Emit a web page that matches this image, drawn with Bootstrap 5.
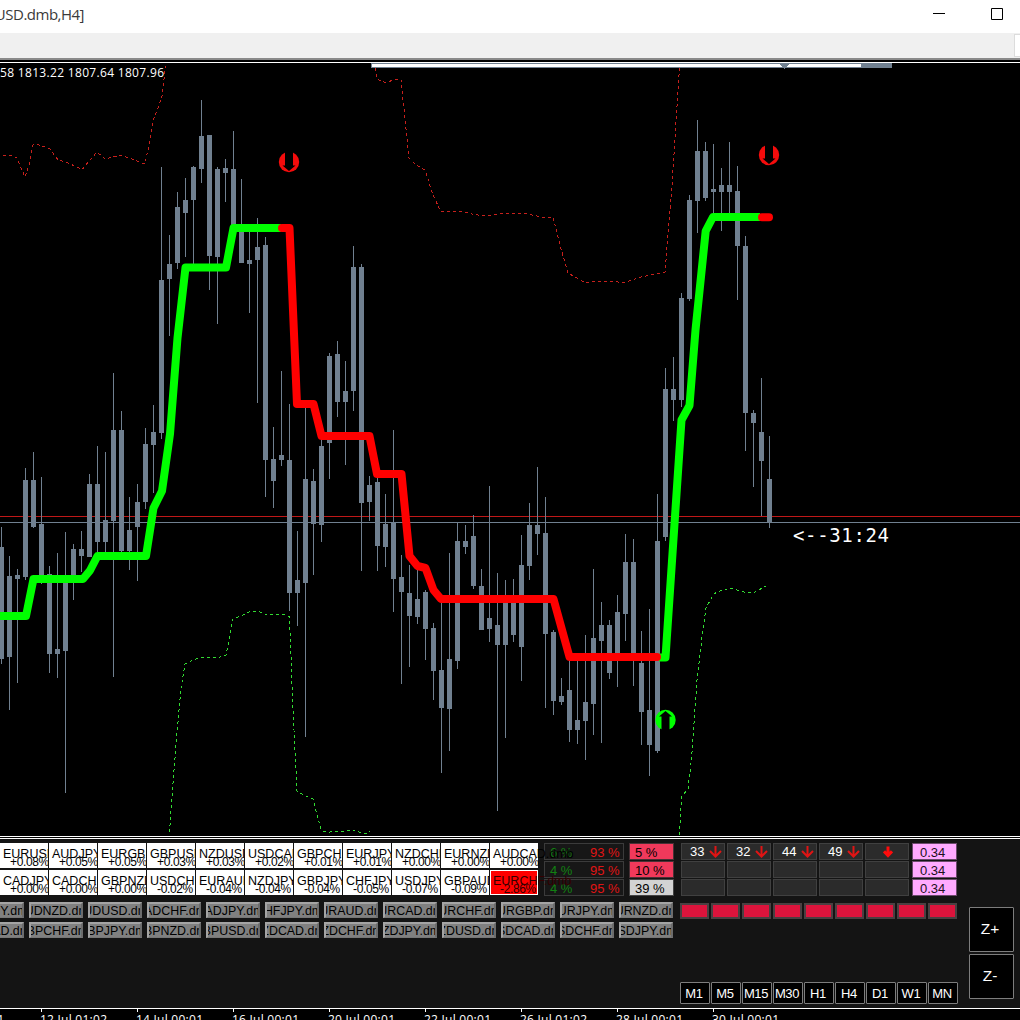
<!DOCTYPE html>
<html lang="en">
<head>
<meta charset="utf-8">
<meta name="viewport" content="width=device-width, initial-scale=1">
<title>USD.dmb,H4</title>
<link href="https://cdn.jsdelivr.net/npm/bootstrap@5.3.0/dist/css/bootstrap.min.css" rel="stylesheet">
<style>
body{width:1020px;height:1020px;background:#000;font-family:"Liberation Sans",Arial,sans-serif;font-size:13px;line-height:1;overflow:hidden}
.titlebar{height:33px;background:#fff;color:#3a3a3a;padding-right:17px}
.title-clip{width:84px;height:33px;overflow:hidden;font:15px/29px "Open Sans","Noto Sans",sans-serif;white-space:nowrap;letter-spacing:-.5px}
.toolstrip{height:25px;background:#f0f0f0}
.toolstrip-end{width:6px;height:23px;margin-top:1px;background:#fff;border:1px solid #dcdcdc;border-right:0}
.frame-top{height:5px;background:#000;border-top:2px solid #8a8a8a;border-bottom:1px solid #fff}
.plot{height:773px}
.plot svg{display:block}
.frame-mid{height:3px;border-top:1px solid #fff;border-bottom:1px solid #fff}
.panel{height:169px;background:#141414;padding-top:4px}
.left-side{width:680px;flex:none}
.quotes{width:539px;display:grid;grid-template-columns:repeat(11,48px);gap:2px 1px;grid-auto-rows:25px;flex:none}
.quote{background:#fff;color:#000;overflow:hidden;white-space:nowrap;padding:5px 0 0 3px;font-size:12.5px}
.quote b{display:block;font-weight:400;height:8px;line-height:13px}
.quote i{display:block;font-style:normal;font-size:12px;line-height:13px;padding-left:7px;letter-spacing:-.35px}
.quote.spill{overflow:visible;position:relative;z-index:2}
.quote.alert-q{background:#f00;border:1px solid #fff;padding:4px 0 0 2px;color:#300}
.stack{display:flex;flex-direction:column;gap:1px}
.box{height:17px;border:1px solid #3b3b3b;background:#171717;line-height:18px;white-space:nowrap}
.pct{width:80px;padding-left:5px}
.pct span{display:inline-block;width:40px;color:#128012}
.pct em{font-style:normal;color:#e01414}
.rate{width:45px;background:#f0395b;border-color:#4a3035;color:#000;padding-left:5px}
.rate.neutral{background:#d3d3d3;border-color:#444}
.pairs{display:flex;gap:5px;margin-left:-30px}
.pair{flex:none;width:54px;height:16px;background:#808080;border:2px solid;border-width:2px 2px 1px 2px;border-color:#a4a4a4 #6c6c6c #777 #a4a4a4;color:#000;font-size:12.4px;line-height:15px;display:flex;justify-content:center;overflow:hidden;white-space:nowrap}
.mid-side{width:278px;flex:none}
.cells{display:grid;grid-template-columns:repeat(5,44px);gap:1px 2px;padding-left:1px;width:229px}
.cells .box{background:#2b2b2b;border-color:#404040;color:#fff;position:relative;display:flex;align-items:center;padding-left:8px}
.cells svg{margin-left:auto;margin-right:2px;display:block}
.lot{width:45px;background:#ffaaff;border-color:#6b4a6b;color:#201020;padding-left:7px;margin-left:3px;line-height:17px}
.marks{display:flex;gap:2px;margin-top:7px}
.markbox{width:29px;height:16px;background:#dc143c;border:2px solid #4a4042}
.frames{display:flex;gap:1px;margin-top:63px}
.tf{width:30px;height:22px;background:#000;border:1px solid #7d7d7d;border-radius:1px;color:#fff;font-size:13px;display:flex;align-items:center;justify-content:center;letter-spacing:-.35px;padding-right:2px}
.zooms{padding:64px 0 0 11px}
.zoombtn{width:45px;height:45px;margin-bottom:2px;background:#000;border:1px solid #7d7d7d;border-radius:1px;color:#fff;font-size:15.5px;display:flex;align-items:center;justify-content:center;padding:0 3px 2px 0}
.axis{height:12px;border-top:1px solid #fff;overflow:hidden}
.axis svg{display:block}
</style>
<script src="https://cdn.jsdelivr.net/npm/bootstrap@5.3.0/dist/js/bootstrap.bundle.min.js"></script>
</head>
<body>
<header class="titlebar d-flex justify-content-between">
  <div class="title-clip d-flex justify-content-end"><span>XAUUSD.dmb,H4]</span></div>
  <svg width="70" height="33" fill="none" stroke="#000"><path d="M0 13.5h12M58.5 8.5h11v11h-11z"/></svg>
</header>
<div class="toolstrip d-flex justify-content-end"><div class="toolstrip-end"></div></div>
<div class="frame-top"></div>

<main class="plot">
<svg width="1020" height="773" viewBox="0 63 1020 773">
  <g shape-rendering="crispEdges">
    <path d="M0 516.5H1020" stroke="#c01818"/>
    <g id="candles" fill="#708090"></g>
    <path d="M0 522.5H1020" stroke="#708090"/>
  </g>
  <g fill="none" stroke-width="1" stroke-dasharray="3 3" shape-rendering="crispEdges">
    <g stroke="#c8201c">
      <path d="M3 155.500L11 155.500 17 158 22 170 25 177 29 165 33 145 38 144.500 50 149 58 160 66 162 82 169.500 97 152 105 159 121 155 137 161 145 164 149 145 153 121 158 108 162 96 165.500 66"/>
      <path d="M375 68L377 79 385 82.500 398 79 401 80 409 158 415 164 425 170 433 195 441 212 455 211 465 212 474 214.500 486 216 506 213 522 213 542 217 553 217 561 249 568 273 585 282.500 605 281 625 282.500 641 277 660 273 665 272 672 186 679.500 67"/>
    </g>
    <g stroke="#32dc32">
      <path d="M169.500 832L173 783 177 733 181 688 185 664 193 660 201 657 217 658 226 655 233 619 241 616 249 612 257 611 265 614 284 614.500 289.500 617 293 710 297 791 305 796 313 799 321 830 327 832.500 337 831 345 831 355 830 361 833 366 834 370 831"/>
      <path d="M679.500 835L681.500 797 688 789 691.700 757 697 680 702.500 633 706 608 713 595 717 592 730 588 747 593 754 592.500 766 586"/>
    </g>
  </g>
  <g fill="none" stroke-width="8" stroke-linejoin="round">
    <path stroke="#0f0" d="M0 616H26L33.500 579H83L90 570.500 97.500 556H146L153.500 508 162 491 170 434 177.500 338 185.500 267.500H226L233.500 228H281"/>
    <path stroke="#0f0" d="M659 657.500H665.500L681.500 420 689.500 405.500 695.500 330 705.700 231 713 217H760"/>
    <path stroke="#f00" stroke-linecap="round" d="M282 228H289.500L297 404H313.500L321.500 436H369.500L377 474H401.500L409.500 556 417.500 566 425.500 568 433.500 590 441 599H553.500L569.500 657H657"/>
    <path stroke="#f00" stroke-linecap="round" d="M762 217.300H769"/>
  </g>
  <g id="signals">
    <g transform="translate(289 162)"><circle r="10.200" fill="#f40c0c"/><path d="M-4-11H4V3.500H6.500L0 9-6.500 3.500H-4z"/></g>
    <g transform="translate(769 155)"><circle r="10.200" fill="#f40c0c"/><path d="M-4-11H4V3.500H6.500L0 9-6.500 3.500H-4z"/></g>
    <g transform="translate(665.500 720) scale(1 -1)"><circle r="10.200" fill="#0f0"/><path d="M-4-11H4V3.500H6.500L0 9-6.500 3.500H-4z"/></g>
  </g>
  <g shape-rendering="crispEdges">
    <path fill="#708090" d="M371 63H892V68H371z"/>
    <path fill="#fff" d="M372 64H861V67H372z"/>
    <path fill="#708090" d="M780 64H789L785 69H784z"/>
  </g>
  <text x="0" y="77" fill="#fff" font-family="Open Sans,Noto Sans,sans-serif" font-size="12" textLength="164">58 1813.22 1807.64 1807.96</text>
  <text x="793" y="542" fill="#fff" font-family="DejaVu Sans Mono,monospace" font-size="19" textLength="96">&lt;--31:24</text>
</svg>
</main>
<div class="frame-mid"></div>

<section class="panel d-flex">
  <div class="left-side">
    <div class="d-flex">
      <div class="quotes" id="quotes"></div>
      <div class="stack" style="margin-left:5px">
        <div class="box pct"><span>6 %</span><em>93 %</em></div>
        <div class="box pct"><span>4 %</span><em>95 %</em></div>
        <div class="box pct"><span>4 %</span><em>95 %</em></div>
      </div>
      <div class="stack" style="margin-left:5px">
        <div class="box rate">5 %</div>
        <div class="box rate">10 %</div>
        <div class="box rate neutral">39 %</div>
      </div>
    </div>
    <div class="overflow-hidden" style="padding-top:6px">
      <div class="pairs" id="pairs1"></div>
      <div class="pairs" id="pairs2" style="margin-top:4px"></div>
    </div>
  </div>
  <div class="mid-side">
    <div class="d-flex">
      <div class="cells" id="cells"></div>
      <div class="stack">
        <div class="box lot">0.34</div><div class="box lot">0.34</div><div class="box lot">0.34</div>
      </div>
    </div>
    <div class="marks" id="marks"></div>
    <div class="frames" id="frames"></div>
  </div>
  <div class="zooms">
    <div class="zoombtn">Z+</div>
    <div class="zoombtn">Z-</div>
  </div>
</section>

<footer class="axis">
<svg width="1020" height="11" viewBox="0 1009 1020 11">
  <path d="M41.500 1009v3M137.500 1009v3M233.500 1009v3M329.500 1009v3M425.500 1009v3M521.500 1009v3M617.500 1009v3M713.500 1009v3" stroke="#fff"/>
  <g id="dates" fill="#fff" font-family="Open Sans,Noto Sans,sans-serif" font-size="12"></g>
</svg>
</footer>

<script>
// one entry per bar: high, body top, body bottom, low (8px apart)
const bars=[[527,547,659,664],[556,576,657,710],[569,575,579,683],[468,480,577,580],[452,480,527,528],[477,524,577,584],[566,574,654,673],[553,649,654,678],[532,577,651,793],[544,549,577,600],[531,549,556,572],[474,484,557,557],[446,484,542,553],[452,520,542,553],[373,430,521,677],[411,430,551,552],[497,530,551,570],[484,502,527,581],[428,444,502,509],[405,432,445,493],
[167,280,433,439],[235,264,279,336],[192,207,263,269],[178,200,213,257],[166,167,200,265],[100,136,169,183],[135,135,256,290],[167,169,257,324],[159,168,173,202],[131,169,226,230],[179,228,263,263],[230,260,264,313],[218,247,260,403],[237,245,460,497],[427,459,481,508],[371,455,460,466],[404,460,593,611],[531,580,593,626],[407,479,583,737],[469,481,524,575],
[437,446,525,542],[353,356,443,479],[341,354,402,417],[361,391,402,465],[246,267,391,411],[264,267,503,571],[476,485,502,521],[477,482,546,571],[494,524,547,567],[430,522,579,612],[555,577,592,684],[565,593,616,667],[570,599,617,624],[590,592,629,660],[623,628,671,700],[603,670,708,773],[553,659,709,751],[523,541,661,669],[525,541,547,554],[515,536,586,589],
[569,586,630,630],[486,618,629,642],[573,625,645,811],[580,600,645,738],[579,600,635,642],[535,565,647,681],[503,525,566,580],[467,525,534,555],[497,533,634,708],[630,632,701,715],[678,696,702,705],[658,690,730,742],[658,720,730,744],[635,702,721,760],[569,638,704,735],[602,625,641,743],[620,625,673,679],[595,612,657,687],[534,562,614,641],[539,562,657,686],
[631,663,712,745],[609,710,745,776],[494,541,751,753],[368,389,537,541],[357,389,400,421],[293,298,400,407],[195,200,299,301],[120,151,201,233],[142,151,198,201],[144,189,192,214],[168,185,192,231],[142,185,192,214],[166,191,246,300],[236,246,413,451],[410,413,423,487],[378,432,461,516],[436,479,522,528]];
document.getElementById('candles').innerHTML=bars.map((b,i)=>{
  const x=1+8*i;
  return `<path d="M${x} ${b[0]}h1V${b[3]}h-1zM${x-2} ${b[1]}h5V${b[2]}h-5z"/>`;
}).join('');

const quotes=[['EURUSD','+0.08%'],['AUDJPY','+0.05%'],['EURGBP','+0.05%'],['GBPUSD','+0.03%'],['NZDUSD','+0.03%'],['USDCAD','+0.02%'],['GBPCHF','+0.01%'],['EURJPY','+0.01%'],['NZDCHF','+0.00%'],['EURNZD','+0.00%'],['AUDCAD','+0.00%'],
['CADJPY','+0.00%'],['CADCHF','+0.00%'],['GBPNZD','+0.00%'],['USDCHF','-0.02%'],['EURAUD','-0.04%'],['NZDJPY','-0.04%'],['GBPJPY','-0.04%'],['CHFJPY','-0.05%'],['USDJPY','-0.07%'],['GBPAUD','-0.09%'],['EURCHF','-2.86%']];
document.getElementById('quotes').innerHTML=quotes.map(([n,v],i)=>
  `<div class="quote${i%11==10?' spill':''}${i==21?' alert-q':''}"><b>${n}.dmb</b><i>${v}</i></div>`).join('');

const pairRow=(id,s)=>document.getElementById(id).innerHTML=s.split(' ').map(n=>`<div class="pair"><span>${n}.dmb</span></div>`).join('');
pairRow('pairs1','AUDJPY AUDNZD AUDUSD CADCHF CADJPY CHFJPY EURAUD EURCAD EURCHF EURGBP EURJPY EURNZD');
pairRow('pairs2','GBPCAD GBPCHF GBPJPY GBPNZD GBPUSD NZDCAD NZDCHF NZDJPY NZDUSD USDCAD USDCHF USDJPY');

const thin='<svg width="13" height="13" fill="none" stroke="#e01414" stroke-width="2"><path d="M6.500 1V12M1 6L6.500 11.500 12 6"/></svg>';
const bold='<svg width="10" height="12" style="margin-right:15px" fill="none" stroke="#ff0c0c" stroke-width="3"><path d="M5 0.500V10M1 5.300L5 9.600 9 5.300"/></svg>';
document.getElementById('cells').innerHTML=['33','32','44','49','',...Array(10).fill(null)].map(v=>
  `<div class="box">${v===null?'':v+(v?thin:bold)}</div>`).join('');
document.getElementById('marks').innerHTML='<div class="markbox"></div>'.repeat(9);
document.getElementById('frames').innerHTML=['M1','M5','M15','M30','H1','H4','D1','W1','MN'].map(t=>`<div class="tf">${t}</div>`).join('');
document.getElementById('dates').innerHTML='<text x="-62" y="1024" textLength="66">8 Jul 00:01</text>'+['12 Jul 01:02','14 Jul 00:01','16 Jul 00:01','20 Jul 00:01','22 Jul 00:01','26 Jul 01:02','28 Jul 00:01','30 Jul 00:01'].map((t,i)=>
  `<text x="${40+96*i}" y="1024" textLength="67">${t}</text>`).join('');
</script>
</body>
</html>
